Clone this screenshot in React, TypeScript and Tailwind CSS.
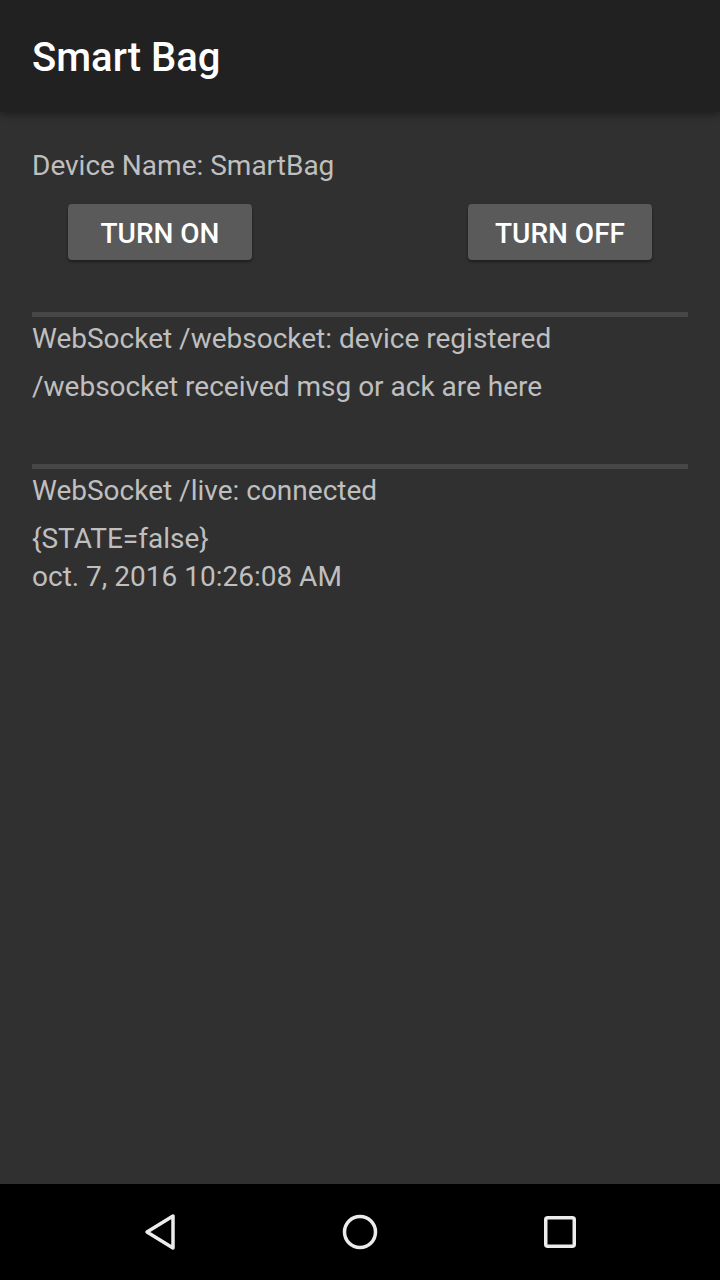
import React from 'react';

const Divider: React.FC = () => <div className="h-[5px] bg-[#474747]" />;

const NavBar: React.FC = () => (
    <div className="h-[96px] bg-black grid grid-cols-3 px-[60px] items-center">
        <div className="flex justify-center">
            <svg width="40" height="40" viewBox="0 0 40 40" fill="none" stroke="#ececec" strokeWidth="3.5" strokeLinejoin="round">
                <path d="M33 4 L33 36 L7 20 Z" />
            </svg>
        </div>
        <div className="flex justify-center">
            <svg width="40" height="40" viewBox="0 0 40 40" fill="none" stroke="#ececec" strokeWidth="3.5">
                <circle cx="20" cy="20" r="15.5" />
            </svg>
        </div>
        <div className="flex justify-center">
            <svg width="40" height="40" viewBox="0 0 40 40" fill="none" stroke="#ececec" strokeWidth="3.5">
                <rect x="5.75" y="5.75" width="28.5" height="28.5" rx="2" />
            </svg>
        </div>
    </div>
);

const App: React.FC = () => {
    return (
        <div className="h-[1280px] w-[720px] flex flex-col bg-[#303030] font-['Roboto',sans-serif] overflow-hidden">
            <header className="relative z-10 h-[112px] shrink-0 bg-[#212121] px-[32px] pt-[4px] flex items-center shadow-[0_2px_8px_rgba(0,0,0,0.45)]">
                <h1 className="text-[40px] font-medium text-white leading-none">Smart Bag</h1>
            </header>

            <main className="flex-1 px-[32px] pt-[35px] text-[28px] leading-[38px] text-[#bfbfbf]">
                <p>Device Name: SmartBag</p>

                <div className="mt-[19px] px-[36px] flex justify-between">
                    <button className="w-[184px] h-[56px] pt-[3px] rounded-[4px] bg-[#5a5a5a] text-white text-[28px] font-medium uppercase shadow-[0_2px_3px_rgba(0,0,0,0.4)]">
                        Turn On
                    </button>
                    <button className="w-[184px] h-[56px] pt-[3px] rounded-[4px] bg-[#5a5a5a] text-white text-[28px] font-medium uppercase shadow-[0_2px_3px_rgba(0,0,0,0.4)]">
                        Turn Off
                    </button>
                </div>

                <div className="mt-[52px]">
                    <Divider />
                    <p className="mt-[3px]">WebSocket /websocket: device registered</p>
                    <p className="mt-[10px]">/websocket received msg or ack are here</p>
                </div>

                <div className="mt-[58px]">
                    <Divider />
                    <p className="mt-[3px]">WebSocket /live: connected</p>
                    <p className="mt-[10px]">
                        {'{STATE=false}'}
                        <br />
                        oct. 7, 2016 10:26:08 AM
                    </p>
                </div>
            </main>

            <NavBar />
        </div>
    );
};

export default App;
